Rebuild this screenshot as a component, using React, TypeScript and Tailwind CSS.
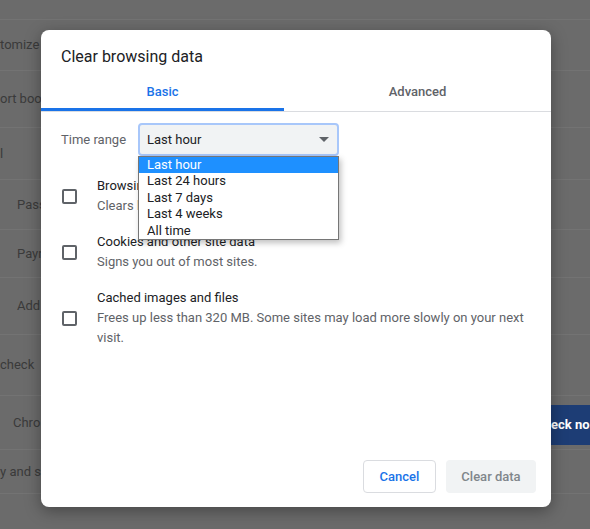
import React from 'react';

const bgRows = [
  { h: 20, t: '', pl: 'pl-0' },
  { h: 51, t: 'tomize', pl: 'pl-0' },
  { h: 57, t: 'ort boo', pl: 'pl-0' },
  { h: 52, t: 'l', pl: 'pl-0' },
  { h: 50, t: 'Pass', pl: 'pl-[17px]' },
  { h: 48, t: 'Payr', pl: 'pl-[17px]' },
  { h: 57, t: 'Add', pl: 'pl-[17px]' },
  { h: 61, t: 'check', pl: 'pl-0' },
  { h: 54, t: 'Chro', pl: 'pl-[13px]' },
  { h: 44, t: 'y and s', pl: 'pl-0' },
];

const items = [
  { title: 'Browsing history', sub: 'Clears history from all synced devices' },
  { title: 'Cookies and other site data', sub: 'Signs you out of most sites.' },
  { title: 'Cached images and files', sub: 'Frees up less than 320 MB. Some sites may load more slowly on your next visit.' },
];

function Checkbox() {
  return <div className="w-[15px] h-[15px] shrink-0 border-2 border-[#5f6368] rounded-[2px]" />;
}

export default function App() {
  return (
    <div className="relative w-[590px] h-[529px] overflow-hidden bg-[#6b6b6b] text-[#3a3a3a]" style={{ fontFamily: 'Roboto, "Liberation Sans", sans-serif' }}>
      <div className="flex flex-col">
        {bgRows.map((r, i) => (
          <div key={i} style={{ height: r.h }} className={`flex items-center border-b border-[#737373] text-[13px] ${r.pl}`}>
            {r.t}
          </div>
        ))}
      </div>
      <div className="absolute left-[551px] top-[405px] w-[50px] h-[40px] bg-[#1d3d75] text-white text-[13px] font-bold flex items-center">eck no</div>

      <div className="absolute left-[41px] top-[30px] w-[510px] h-[477px] bg-white rounded-[8px] shadow-[0_4px_16px_rgba(0,0,0,0.35)] flex flex-col">
        <div className="pl-[20px] pt-[16px] text-[16px] leading-[22px] text-[#202124]">Clear browsing data</div>
        <div className="flex mt-[14px] border-b border-[#dadce0] text-[13px] font-medium">
          <div className="w-[243px] h-[29px] flex justify-center items-start text-[#1a73e8] border-b-[3px] border-[#1a73e8] -mb-px">Basic</div>
          <div className="flex-1 h-[29px] flex justify-center items-start text-[#5f6368]">Advanced</div>
        </div>
        <div className="relative flex items-center pl-[20px] pt-[11px] text-[13px]">
          <span className="text-[#5f6368] w-[77px]">Time range</span>
          <div className="w-[201px] h-[33px] bg-[#f1f3f4] border-2 border-[#a8c7fa] rounded-[4px] flex items-center justify-between pl-[7px] pr-[8px] text-[#202124]">
            Last hour
            <span className="w-0 h-0 border-l-[5px] border-r-[5px] border-t-[5px] border-l-transparent border-r-transparent border-t-[#5f6368]" />
          </div>
          <div className="absolute left-[97px] top-[44px] w-[201px] bg-white border border-[#767676] shadow-[2px_3px_6px_rgba(0,0,0,0.25)] text-[13px] leading-[16.4px] text-[#202124] z-10">
            <div className="bg-[#1e90ff] text-white px-[8px]">Last hour</div>
            <div className="px-[8px]">Last 24 hours</div>
            <div className="px-[8px]">Last 7 days</div>
            <div className="px-[8px]">Last 4 weeks</div>
            <div className="px-[8px]">All time</div>
          </div>
        </div>
        <div className="flex flex-col gap-[16px] pl-[21px] pr-[20px] mt-[20px] text-[13px] leading-[20px]">
          {items.map((it) => (
            <div key={it.title} className="flex gap-[20px] items-center">
              <Checkbox />
              <div>
                <div className="text-[#202124]">{it.title}</div>
                <div className="text-[#5f6368]">{it.sub}</div>
              </div>
            </div>
          ))}
        </div>
        <div className="flex-1" />
        <div className="flex justify-end gap-[10px] pr-[15px] pb-[14px] text-[13px] font-medium">
          <button className="w-[73px] h-[33px] border border-[#dadce0] rounded-[4px] text-[#1a73e8] bg-white">Cancel</button>
          <button className="w-[90px] h-[33px] rounded-[4px] text-[#80868b] bg-[#f1f3f4]">Clear data</button>
        </div>
      </div>
    </div>
  );
}
